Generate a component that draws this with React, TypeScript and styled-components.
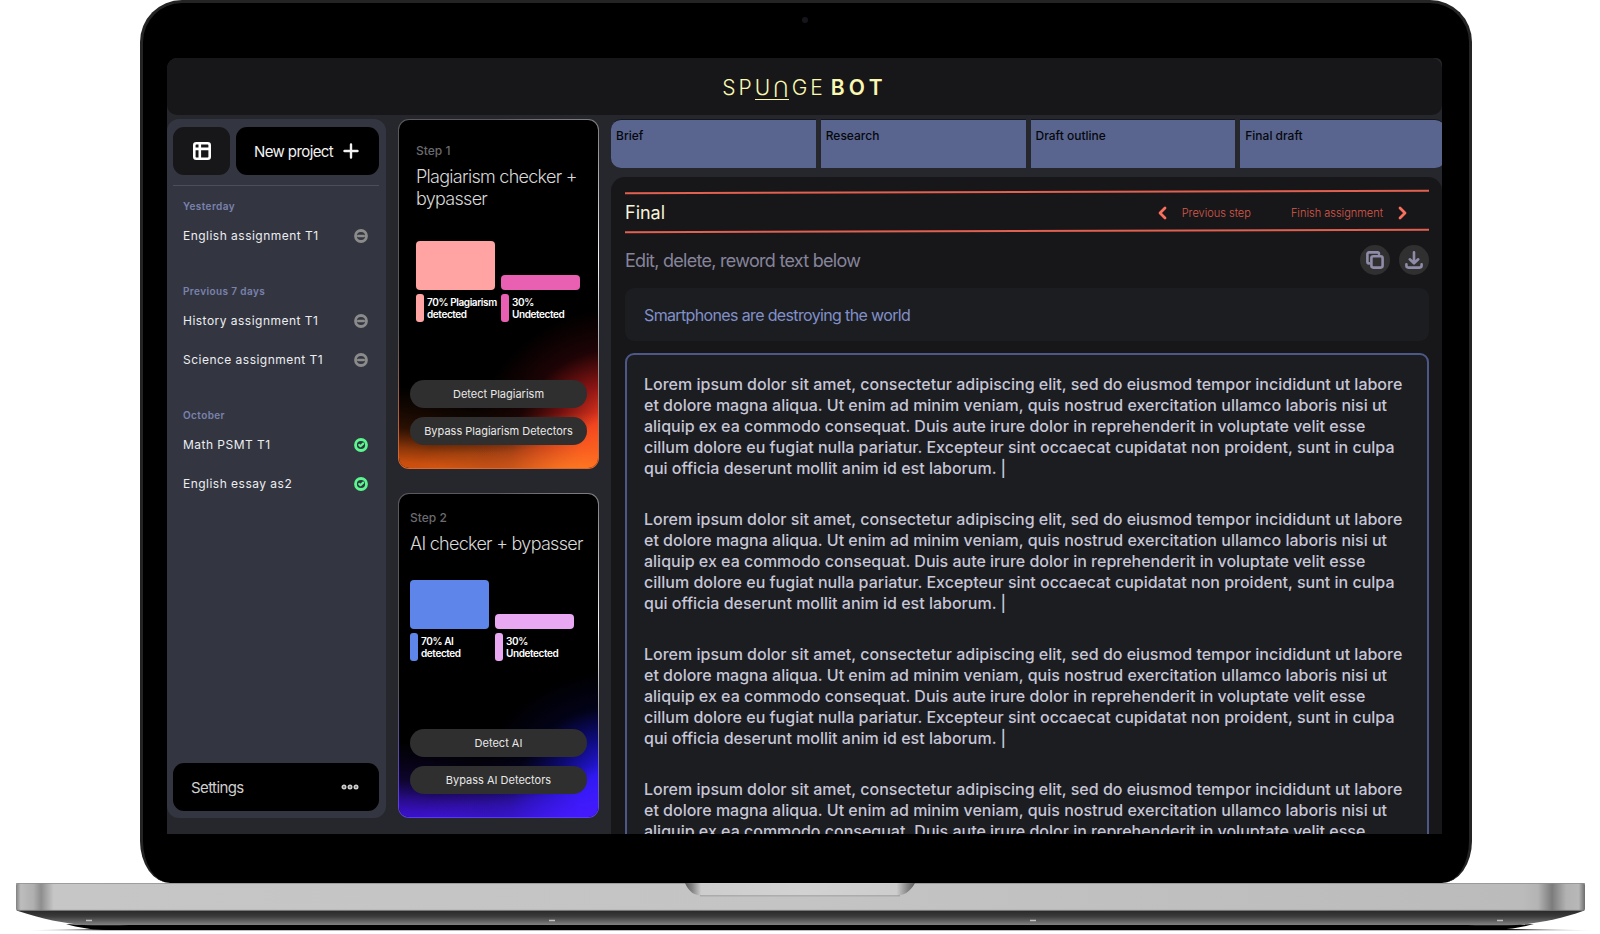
import React from "react";
import styled, { createGlobalStyle } from "styled-components";

const GlobalStyle = createGlobalStyle`
  *, *::before, *::after { box-sizing: border-box; }
  body { margin: 0; background: #fff; font-family: Inter, "Liberation Sans", sans-serif; }
  button { font: inherit; border: 0; padding: 0; cursor: pointer; }
  h1, h2, h3, p, ul { margin: 0; padding: 0; font-weight: inherit; }
  ul { list-style: none; }
`;

const Laptop = styled.div`
  display: flex;
  flex-direction: column;
  height: 100vh;
  min-height: 720px;
  overflow: hidden;
`;

const Lid = styled.div`
  flex: 1;
  min-height: 0;
  margin: 0 128px 0 140px;
  padding: 14px 27px 49px 24px;
  display: flex;
  flex-direction: column;
  background: #000;
  border: 3px solid #242424;
  border-bottom: 0;
  border-radius: 42px 42px 30px 30px / 42px 42px 42px 42px;
`;

const Camera = styled.div`
  align-self: center;
  width: 6px;
  height: 6px;
  margin-bottom: 35px;
  border-radius: 50%;
  background: #14161c;
`;

const Screen = styled.div`
  flex: 1;
  min-height: 0;
  display: flex;
  flex-direction: column;
  overflow: hidden;
  border-radius: 10px 6px 0 0;
  background: #26272c;
`;

const Header = styled.header`
  flex: none;
  height: 57px;
  display: flex;
  align-items: center;
  justify-content: center;
  border-radius: 10px;
  background: #17171a;
`;

const Logo = styled.a`
  display: flex;
  align-items: center;
  gap: 3px;
  padding: 2px 4px 0 0;
  color: #fbf9b1;
  font-size: 21px;
  line-height: 24px;
  font-weight: 300;
  text-decoration: none;
`;

const LogoMark = styled.span`
  display: flex;
  gap: 3px;
  line-height: 22px;
  box-shadow: 0 1px 0 #fbf9b1;
`;

const LogoFlip = styled.span`
  transform: rotate(180deg);
`;

const LogoBold = styled.b`
  display: flex;
  gap: 4px;
  margin-left: 5px;
  font-weight: 600;
`;

const Workspace = styled.div`
  flex: 1;
  min-height: 0;
  display: grid;
  grid-template-columns: 219px 201px minmax(0, 1fr);
  gap: 12px;
  padding-top: 4px;
`;

const Sidebar = styled.aside`
  display: flex;
  flex-direction: column;
  margin-bottom: 17px;
  padding: 8px 7px 7px 6px;
  border-radius: 12px;
  background: #333641;
`;

const SidebarTop = styled.div`
  display: flex;
  gap: 6px;
  padding-bottom: 10px;
  border-bottom: 1px solid #4c4e58;
`;

const GridButton = styled.button`
  width: 57px;
  height: 48px;
  display: grid;
  place-items: center;
  border-radius: 11px;
  background: #17171a;
  color: #fff;
`;

const DarkButton = styled.button`
  flex: 1;
  height: 48px;
  display: flex;
  align-items: center;
  justify-content: space-between;
  padding: 0 20px 0 18px;
  border-radius: 11px;
  background: #000;
  color: #f2f2f2;
  font-size: 15px;
  letter-spacing: -0.04em;
`;

const SettingsButton = styled(DarkButton)`
  flex: none;
  color: #cfcfcf;
`;

const Projects = styled.nav`
  flex: 1;
  display: flex;
  flex-direction: column;
  gap: 37px;
  padding: 12px 11px 0 10px;
`;

const GroupLabel = styled.h2`
  margin-bottom: 12px;
  color: #7a82ad;
  font-size: 10px;
  line-height: 16px;
  font-weight: 600;
  letter-spacing: 0.04em;
`;

const ProjectList = styled.ul`
  display: flex;
  flex-direction: column;
  gap: 19px;
`;

const ProjectLink = styled.a`
  display: flex;
  align-items: center;
  justify-content: space-between;
  color: #ededf0;
  font-size: 12px;
  line-height: 20px;
  letter-spacing: 0.04em;
  text-decoration: none;
`;

const Steps = styled.div`
  display: flex;
  flex-direction: column;
  gap: 24px;
  padding-bottom: 17px;
`;

const fire = `
  radial-gradient(ellipse 66% 13% at 36% 83%, rgba(0,0,0,.6), rgba(0,0,0,.3) 50%, transparent),
  radial-gradient(ellipse 80% 18% at 88% 102%, #ff8022, rgba(255,110,32,.6) 45%, transparent),
  radial-gradient(ellipse 74% 42% at 110% 96%, #ff5420, #ee3a1f 26%, rgba(200,30,28,.7) 48%, rgba(100,12,18,.3) 72%, transparent),
  radial-gradient(ellipse 130% 33% at 0% 110%, #f26212, #c84e0e 35%, rgba(90,34,6,.6) 65%, transparent)`;

const violet = `
  radial-gradient(ellipse 66% 13% at 36% 83%, rgba(0,0,0,.5), rgba(0,0,0,.25) 50%, transparent),
  radial-gradient(ellipse 80% 18% at 88% 102%, #481aff, rgba(70,26,255,.6) 45%, transparent),
  radial-gradient(ellipse 74% 42% at 110% 96%, #3a1cff, #2a18ee 26%, rgba(22,18,190,.7) 48%, rgba(8,8,80,.3) 72%, transparent),
  radial-gradient(ellipse 130% 33% at 0% 110%, #4a14ec, #3810c0 35%, rgba(28,10,90,.6) 65%, transparent)`;

type Glow = "fire" | "violet";

const StepCard = styled.section<{ $glow: Glow }>`
  flex: ${(p) => (p.$glow === "fire" ? "1 1 350px" : "1 1 325px")};
  min-height: 0;
  display: flex;
  flex-direction: column;
  padding: ${(p) => (p.$glow === "fire" ? "21px" : "14px")} 11px 23px;
  border: 1px solid transparent;
  border-radius: 11px;
  background:
    ${(p) => (p.$glow === "fire" ? fire : violet)} padding-box,
    linear-gradient(#000, #000) padding-box,
    radial-gradient(ellipse 70% 60% at 100% 40%, #f4f4f4, rgba(150,150,150,.7) 60%, transparent),
    linear-gradient(#5a5a5e 60%, ${(p) => (p.$glow === "fire" ? "#e0662a" : "#5a3cf0")}) border-box;
  background-origin: padding-box, padding-box, padding-box, padding-box, padding-box, border-box, border-box;
  background-clip: padding-box, padding-box, padding-box, padding-box, padding-box, border-box, border-box;
`;

const StepBody = styled.div<{ $inset: boolean }>`
  flex: 1;
  padding-left: ${(p) => (p.$inset ? "6px" : "0")};
`;

const StepLabel = styled.p`
  color: #6b6b6e;
  font-size: 12px;
  line-height: 20px;
  font-weight: 500;
`;

const StepTitle = styled.h2<{ $lines: number }>`
  margin: 5px 0 ${(p) => (p.$lines > 1 ? 31 : 25)}px;
  color: #d8d8d8;
  font-size: 18px;
  line-height: 22px;
  font-weight: 300;
  letter-spacing: -0.04em;
`;

const Chart = styled.div`
  display: grid;
  grid-template-columns: 79px 79px;
  align-items: end;
  gap: 4px 6px;
`;

const Bar = styled.div<{ $color: string; $tall?: boolean }>`
  height: ${(p) => (p.$tall ? 49 : 15)}px;
  border-radius: 4px;
  background: ${(p) => p.$color};
`;

const Legend = styled.p<{ $color: string }>`
  display: flex;
  align-items: center;
  gap: 3px;
  height: 28px;
  color: #fff;
  font-size: 10px;
  line-height: 12px;
  font-weight: 600;
  letter-spacing: -0.04em;
  white-space: nowrap;

  &::before {
    content: "";
    flex: none;
    width: 8px;
    height: 28px;
    border-radius: 3px;
    background: ${(p) => p.$color};
  }
`;

const Actions = styled.div`
  display: flex;
  flex-direction: column;
  gap: 9px;
`;

const PillButton = styled.button`
  height: 28px;
  border-radius: 14px;
  background: #2f2f2f;
  color: #e8e8e8;
  font-size: 11px;
`;

const Main = styled.main`
  display: flex;
  flex-direction: column;
  gap: 9px;
  min-height: 0;
  overflow: hidden;
`;

const Tabs = styled.nav`
  flex: none;
  display: grid;
  grid-template-columns: repeat(4, 1fr);
  gap: 5px;
  margin-right: -3px;
`;

const Tab = styled.button`
  height: 49px;
  padding: 9px 5px;
  border-top: 1px solid #15161c;
  background: #59658f;
  color: #06070b;
  font-size: 12px;
  line-height: 14px;
  font-weight: 500;
  text-align: left;
  display: flex;
  align-items: flex-start;

  &:first-child { border-radius: 10px 0 0 10px; }
  &:last-child { border-radius: 0 10px 10px 0; }
`;

const Panel = styled.section`
  flex: 1;
  min-height: 0;
  padding: 14px 13px 0 14px;
  border-radius: 14px 14px 0 0;
  background: #17171a;
`;

const Rule = styled.hr`
  height: 2px;
  margin: 0;
  border: 0;
  background: #e2604f;
  transform: rotate(-0.18deg);
`;

const StepBar = styled.div`
  display: flex;
  align-items: center;
  height: 37px;
  padding: 2px 22px 0 0;
`;

const PanelTitle = styled.h1`
  flex: 1;
  color: #f6f4da;
  font-size: 18px;
  line-height: 22px;
`;

const StepLink = styled.button`
  display: flex;
  align-items: center;
  gap: 15px;
  margin-left: 40px;
  background: none;
  color: #d9594a;
  font-size: 11px;
  font-weight: 300;
  line-height: 16px;
`;

const HintRow = styled.div`
  display: flex;
  align-items: center;
  gap: 9px;
  height: 30px;
  margin: 13px 0;
`;

const Hint = styled.p`
  flex: 1;
  padding-top: 2px;
  color: #86849a;
  font-size: 18px;
  line-height: 22px;
  letter-spacing: -0.04em;
`;

const RoundButton = styled.button`
  width: 30px;
  height: 30px;
  display: grid;
  place-items: center;
  border-radius: 50%;
  background: #303031;
  color: #8f8ca9;
`;

const TopicInput = styled.input`
  display: block;
  width: 100%;
  height: 53px;
  padding: 0 19px;
  border: 0;
  border-radius: 9px;
  background: #1c1d21;
  color: #8190c8;
  font: 400 16px/20px Inter, "Liberation Sans", sans-serif;
  letter-spacing: -0.04em;
  outline: 0;
`;

const Editor = styled.div`
  display: flex;
  flex-direction: column;
  gap: 30px;
  margin-top: 12px;
  padding: 19px 22px 19px 17px;
  border: 2px solid #4c5888;
  border-radius: 9px;
  background: #1c1d21;
  color: #c6c6d6;
  font-size: 16px;
  line-height: 21px;
  font-weight: 500;
  outline: 0;
`;

const BaseDrawing = styled.svg`
  flex: none;
  display: block;
  width: 100%;
  height: 51px;
`;

const GridIcon = () => (
  <svg width="18" height="18" viewBox="0 0 18 18" fill="none" stroke="currentColor" strokeWidth="2.6" aria-hidden="true">
    <rect x="1.3" y="1.3" width="15.4" height="15.4" rx="2" />
    <path d="M6.8 1v16M1 6.9h16" />
  </svg>
);

const PlusIcon = () => (
  <svg width="16" height="16" viewBox="0 0 16 16" fill="none" stroke="currentColor" strokeWidth="2.4" strokeLinecap="round" aria-hidden="true">
    <path d="M8 1.5v13M1.5 8h13" />
  </svg>
);

const DotsIcon = () => (
  <svg width="18" height="6" viewBox="0 0 18 6" fill="none" stroke="currentColor" strokeWidth="1.8" aria-hidden="true">
    <circle cx="3" cy="3" r="1.6" />
    <circle cx="9" cy="3" r="1.6" />
    <circle cx="15" cy="3" r="1.6" />
  </svg>
);

const PendingIcon = () => (
  <svg width="14" height="14" viewBox="0 0 14 14" fill="none" stroke="#8b8b8b" aria-label="In progress">
    <circle cx="7" cy="7" r="5.5" strokeWidth="2.8" />
    <path d="M4.2 7h5.6" strokeWidth="2.4" strokeLinecap="round" />
  </svg>
);

const DoneIcon = () => (
  <svg width="14" height="14" viewBox="0 0 14 14" fill="none" stroke="#5bf78f" aria-label="Done">
    <circle cx="7" cy="7" r="5.5" strokeWidth="2.8" />
    <path d="M5.2 7l1.300 1.200 2.700-2.600" strokeWidth="2.2" strokeLinecap="round" strokeLinejoin="round" />
  </svg>
);

const Chevron = ({ right }: { right?: boolean }) => (
  <svg width="9" height="14" viewBox="0 0 9 14" fill="none" stroke="#f9705c" strokeWidth="2.8" strokeLinecap="round" strokeLinejoin="round" aria-hidden="true">
    <path d={right ? "M2 2l5 5-5 5" : "M7 2L2 7l5 5"} />
  </svg>
);

const CopyIcon = () => (
  <svg width="18" height="18" viewBox="0 0 18 18" fill="none" stroke="currentColor" strokeWidth="2.6" strokeLinejoin="round" strokeLinecap="round" aria-hidden="true">
    <rect x="5.4" y="5.2" width="11.2" height="11.4" rx="2" />
    <path d="M3 12.4A1.7 1.7 0 0 1 1.4 10.700V3A1.6 1.6 0 0 1 3 1.400h8.400A1.6 1.6 0 0 1 13 3" />
  </svg>
);

const DownloadIcon = () => (
  <svg width="18" height="18" viewBox="0 0 18 18" fill="none" stroke="currentColor" strokeWidth="2.6" strokeLinejoin="round" strokeLinecap="round" aria-hidden="true">
    <path d="M9 1.3v10.700M4.8 8.300L9 12.300l4.200-4" />
    <path d="M1.4 13.200v1.400a2 2 0 0 0 2 2h11.200a2 2 0 0 0 2-2v-1.400" />
  </svg>
);

const LaptopBase = () => (
  <BaseDrawing viewBox="0 0 1600 51" preserveAspectRatio="none" aria-hidden="true">
    <defs>
      <linearGradient id="deck">
        <stop offset="0" stopColor="#808080" />
        <stop offset=".003" stopColor="#bdbdbd" />
        <stop offset=".008" stopColor="#b4b4b4" />
        <stop offset=".011" stopColor="#b0b0b0" />
        <stop offset=".016" stopColor="#8e8e8e" />
        <stop offset=".024" stopColor="#c6c6c6" />
        <stop offset=".5" stopColor="#c4c4c4" />
        <stop offset=".96" stopColor="#bbbbbb" />
        <stop offset=".97" stopColor="#b4b4b4" />
        <stop offset=".979" stopColor="#7c7c7c" />
        <stop offset=".988" stopColor="#b2b2b2" />
        <stop offset=".996" stopColor="#b8b8b8" />
        <stop offset="1" stopColor="#6c6c6c" />
      </linearGradient>
      <linearGradient id="under" x2="0" y2="1">
        <stop offset="0" stopColor="#2b2b2b" />
        <stop offset=".35" stopColor="#3a3a3a" />
        <stop offset="1" stopColor="#8a8a8a" />
      </linearGradient>
      <linearGradient id="notch">
        <stop offset="0" stopColor="#5c5c5c" />
        <stop offset=".03" stopColor="#828282" />
        <stop offset=".07" stopColor="#cdcdcd" />
        <stop offset=".5" stopColor="#d2d2d2" />
        <stop offset=".92" stopColor="#cdcdcd" />
        <stop offset=".97" stopColor="#828282" />
        <stop offset="1" stopColor="#5c5c5c" />
      </linearGradient>
      <linearGradient id="ground">
        <stop offset="0" stopColor="#000" stopOpacity="0" />
        <stop offset=".05" stopColor="#000" />
        <stop offset=".95" stopColor="#000" />
        <stop offset="1" stopColor="#000" stopOpacity="0" />
      </linearGradient>
    </defs>
    <path d="M18 28H1583C1560 36 1540 40 1510 43H90C62 40 42 36 18 28Z" fill="url(#under)" />
    <path d="M66 41C84 46 92 47 130 47H1470C1505 47 1515 46 1534 41C1500 43 1480 42 1460 42H140C110 42 90 43 66 41Z" fill="#000" />
    <path d="M25 47.2L140 45.5H1460L1595 47.200Z" fill="url(#ground)" />
    <path d="M16 2a2 2 0 0 1 2-2H1583a2 2 0 0 1 2 2V26a2 2 0 0 1-2 2H18a2 2 0 0 1-2-2Z" fill="url(#deck)" />
    <path d="M17 27.4H1584" stroke="#6f6f6f" />
    <path d="M16 .4H1585" stroke="#8d8d8d" strokeWidth=".8" />
    <path d="M685 0H915C910 9 904 13 893 13H706C694 13 689 9 685 0Z" fill="url(#notch)" />
    <path d="M700 12.800H900" stroke="#8f8f8f" strokeWidth=".8" />
    <path d="M86 37.5h6M549 37.5h6M1030 37.5h6M1497 37.5h6" stroke="#c0c0c0" strokeWidth="1.4" />
  </BaseDrawing>
);

const groups = [
  { label: "Yesterday", done: false, items: ["English assignment T1"] },
  { label: "Previous 7 days", done: false, items: ["History assignment T1", "Science assignment T1"] },
  { label: "October", done: true, items: ["Math PSMT T1", "English essay as2"] },
];

const steps: {
  glow: Glow; label: string; title: string; lines: number; found: string;
  colors: [string, string]; actions: string[];
}[] = [
  {
    glow: "fire", label: "Step 1", title: "Plagiarism checker + bypasser", lines: 2, found: "Plagiarism",
    colors: ["#ffa3a3", "#e95fb1"], actions: ["Detect Plagiarism", "Bypass Plagiarism Detectors"],
  },
  {
    glow: "violet", label: "Step 2", title: "AI checker + bypasser", lines: 1, found: "AI",
    colors: ["#5e86ea", "#e9a8f2"], actions: ["Detect AI", "Bypass AI Detectors"],
  },
];

const lorem =
  "Lorem ipsum dolor sit amet, consectetur adipiscing elit, sed do eiusmod tempor incididunt ut labore et dolore magna aliqua. Ut enim ad minim veniam, quis nostrud exercitation ullamco laboris nisi ut aliquip ex ea commodo consequat. Duis aute irure dolor in reprehenderit in voluptate velit esse cillum dolore eu fugiat nulla pariatur. Excepteur sint occaecat cupidatat non proident, sunt in culpa qui officia deserunt mollit anim id est laborum. |";

export default function App() {
  return (
    <>
      <GlobalStyle />
      <Laptop>
        <Lid>
          <Camera />
          <Screen>
            <Header>
              <Logo href="#" aria-label="Spunge Bot">
                <span>S</span>
                <span>P</span>
                <LogoMark>
                  <span>U</span>
                  <LogoFlip>U</LogoFlip>
                </LogoMark>
                <span>G</span>
                <span>E</span>
                <LogoBold>
                  <span>B</span>
                  <span>O</span>
                  <span>T</span>
                </LogoBold>
              </Logo>
            </Header>
            <Workspace>
              <Sidebar>
                <SidebarTop>
                  <GridButton aria-label="Toggle sidebar"><GridIcon /></GridButton>
                  <DarkButton>New project <PlusIcon /></DarkButton>
                </SidebarTop>
                <Projects>
                  {groups.map((g) => (
                    <section key={g.label}>
                      <GroupLabel>{g.label}</GroupLabel>
                      <ProjectList>
                        {g.items.map((item) => (
                          <li key={item}>
                            <ProjectLink href="#">{item}{g.done ? <DoneIcon /> : <PendingIcon />}</ProjectLink>
                          </li>
                        ))}
                      </ProjectList>
                    </section>
                  ))}
                </Projects>
                <SettingsButton>Settings <DotsIcon /></SettingsButton>
              </Sidebar>
              <Steps>
                {steps.map((s) => (
                  <StepCard key={s.label} $glow={s.glow}>
                    <StepBody $inset={s.glow === "fire"}>
                      <StepLabel>{s.label}</StepLabel>
                      <StepTitle $lines={s.lines}>{s.title}</StepTitle>
                      <Chart>
                        <Bar $color={s.colors[0]} $tall />
                        <Bar $color={s.colors[1]} />
                        <Legend $color={s.colors[0]}><span>70% {s.found}<br />detected</span></Legend>
                        <Legend $color={s.colors[1]}><span>30%<br />Undetected</span></Legend>
                      </Chart>
                    </StepBody>
                    <Actions>
                      {s.actions.map((a) => <PillButton key={a}>{a}</PillButton>)}
                    </Actions>
                  </StepCard>
                ))}
              </Steps>
              <Main>
                <Tabs>
                  <Tab>Brief</Tab>
                  <Tab>Research</Tab>
                  <Tab>Draft outline</Tab>
                  <Tab>Final draft</Tab>
                </Tabs>
                <Panel>
                  <Rule />
                  <StepBar>
                    <PanelTitle>Final</PanelTitle>
                    <StepLink><Chevron />Previous step</StepLink>
                    <StepLink>Finish assignment<Chevron right /></StepLink>
                  </StepBar>
                  <Rule />
                  <HintRow>
                    <Hint>Edit, delete, reword text below</Hint>
                    <RoundButton aria-label="Copy"><CopyIcon /></RoundButton>
                    <RoundButton aria-label="Download"><DownloadIcon /></RoundButton>
                  </HintRow>
                  <TopicInput aria-label="Topic" defaultValue="Smartphones are destroying the world" />
                  <Editor role="textbox" aria-multiline="true" aria-label="Essay text" contentEditable suppressContentEditableWarning>
                    {[0, 1, 2, 3].map((n) => <p key={n}>{lorem}</p>)}
                  </Editor>
                </Panel>
              </Main>
            </Workspace>
          </Screen>
        </Lid>
        <LaptopBase />
      </Laptop>
    </>
  );
}
